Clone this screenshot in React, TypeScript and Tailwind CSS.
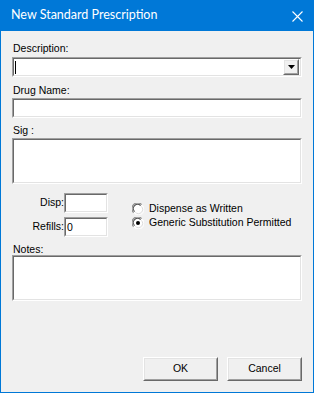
import React from "react";

function Sunken({ className = "", children }: { className?: string; children?: React.ReactNode }) {
  return (
    <div className={`border border-t-[#a0a0a0] border-l-[#a0a0a0] border-b-white border-r-white ${className}`}>
      <div className="h-full w-full border border-t-[#696969] border-l-[#696969] border-b-[#e3e3e3] border-r-[#e3e3e3] bg-white">
        {children}
      </div>
    </div>
  );
}

function Raised({ className = "", children }: { className?: string; children?: React.ReactNode }) {
  return (
    <div className={`border border-t-white border-l-white border-b-[#696969] border-r-[#696969] ${className}`}>
      <div className="flex h-full w-full items-center justify-center border border-t-[#e3e3e3] border-l-[#e3e3e3] border-b-[#a0a0a0] border-r-[#a0a0a0] bg-[#f0f0f0]">
        {children}
      </div>
    </div>
  );
}

function Radio({ checked }: { checked?: boolean }) {
  return (
    <svg width="12" height="12" viewBox="0 0 12 12" className="shrink-0">
      <circle cx="6" cy="6" r="5.5" fill="#fff" />
      <path d="M1.6 9.6 A5.5 5.5 0 0 1 9.6 1.6" stroke="#8a8a8a" strokeWidth="1.2" fill="none" />
      <path d="M2.6 8.6 A4.2 4.2 0 0 1 8.6 2.6" stroke="#505050" strokeWidth="1.1" fill="none" />
      <path d="M10.4 2.4 A5.5 5.5 0 0 1 2.4 10.4" stroke="#ffffff" strokeWidth="1" fill="none" />
      <path d="M9.4 3.4 A4.2 4.2 0 0 1 3.4 9.4" stroke="#dcdcdc" strokeWidth="1" fill="none" />
      {checked && <circle cx="6" cy="6" r="2" fill="#000" />}
    </svg>
  );
}

export default function App() {
  return (
    <div
      className="flex h-[393px] w-[314px] flex-col border border-t-0 border-[#0078d7] bg-[#f0f0f0] text-[10.5px] text-black"
      style={{ fontFamily: '"Liberation Sans", Arial, sans-serif' }}
    >
      <div className="flex h-[31px] shrink-0 items-center justify-between bg-[#0078d7] pl-[10px] pr-[10px]">
        <span className="text-[12.5px] text-white" style={{ fontFamily: 'Lato, "Noto Sans", sans-serif' }}>
          New Standard Prescription
        </span>
        <svg width="11" height="11" viewBox="0 0 11 11" className="mt-[1px]">
          <path d="M0.5 0.5 L10.5 10.5 M10.5 0.5 L0.5 10.5" stroke="#fff" strokeWidth="1.1" />
        </svg>
      </div>
      <div className="flex flex-1 flex-col px-[11px] pb-[11px] pt-[11px]">
        <div className="h-[13px] pl-px leading-[13px]">Description:</div>
        <Sunken className="mt-[2px] h-[20px]">
          <div className="flex h-full items-center justify-between pl-[1px] pr-[1px]">
            <div className="h-[13px] w-px bg-black" />
            <Raised className="h-[16px] w-[16px]">
              <svg width="7" height="4" viewBox="0 0 7 4">
                <path d="M0 0 H7 L3.5 4 Z" fill="#000" />
              </svg>
            </Raised>
          </div>
        </Sunken>
        <div className="mt-[7px] h-[13px] pl-px leading-[13px]">Drug Name:</div>
        <Sunken className="mt-px h-[20px]" />
        <div className="mt-[6px] h-[13px] pl-px leading-[13px]">Sig :</div>
        <Sunken className="mt-px h-[46px]" />
        <div className="mt-[9px] flex">
          <div className="flex flex-col">
            <div className="flex items-center">
              <div className="w-[52px] text-right">Disp:</div>
              <Sunken className="h-[20px] w-[44px]" />
            </div>
            <div className="mt-[4px] flex items-center">
              <div className="w-[52px] text-right">Refills:</div>
              <Sunken className="h-[20px] w-[44px]">
                <div className="pl-[1px] leading-[17px]">0</div>
              </Sunken>
            </div>
          </div>
          <div className="ml-[24px] mt-[9px] flex flex-col">
            <div className="flex h-[14px] items-center gap-[5px]">
              <Radio />
              <span>Dispense as Written</span>
            </div>
            <div className="flex h-[14px] items-center gap-[5px]">
              <Radio checked />
              <span>Generic Substitution Permitted</span>
            </div>
          </div>
        </div>
        <div className="mt-[6px] h-[12px] pl-px leading-[12px]">Notes:</div>
        <Sunken className="h-[46px]" />
        <div className="mt-auto flex justify-end gap-[9px]">
          <Raised className="h-[24px] w-[75px]">OK</Raised>
          <Raised className="h-[24px] w-[75px]">Cancel</Raised>
        </div>
      </div>
    </div>
  );
}
